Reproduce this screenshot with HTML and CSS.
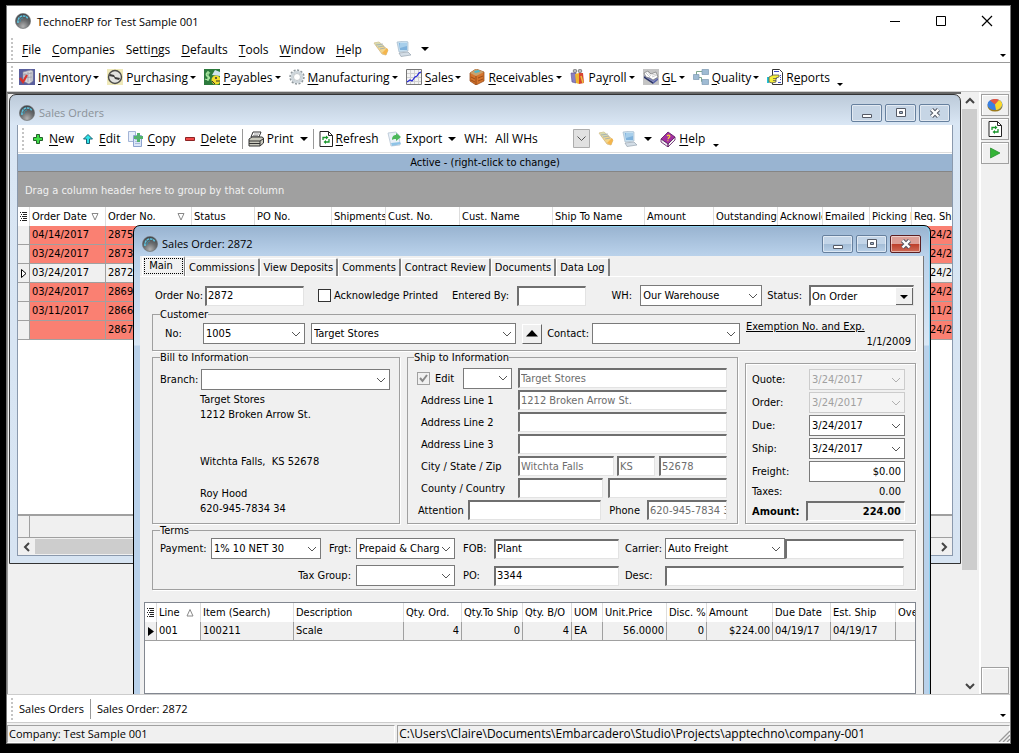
FILE: index.html
```html
<!DOCTYPE html>
<html lang="en">
<head>
    <meta charset="UTF-8">
    <meta name="viewport" content="width=device-width, initial-scale=1.0">
    <title>TechnoERP for Test Sample 001</title>
    <link rel="stylesheet" href="styles.css">
</head>
<body>
    <!-- Shared icons -->
    <svg class="defs" aria-hidden="true">
        <defs>
            <radialGradient id="ball" cx="0.5" cy="0.85" r="0.8">
                <stop offset="0" stop-color="#b0b0b0"/>
                <stop offset="0.5" stop-color="#6c6e70"/>
                <stop offset="1" stop-color="#42464a"/>
            </radialGradient>
        </defs>
        <symbol id="app" viewBox="0 0 16 16">
            <circle cx="8" cy="8" r="7.6" fill="url(#ball)" stroke="#6d7072" stroke-width="0.6"/>
            <path d="M3 10C2.500 5.500 5 3 8 3s4 1 5 3" fill="none" stroke="#5cc4e0" stroke-width="1.600" stroke-dasharray="2.500 0.700"/>
            <path d="M5 9c0-2 1-4 3-4" fill="none" stroke="#3d90aa" stroke-width="1"/>
        </symbol>
        <symbol id="note" viewBox="0 0 16 16">
            <path d="M1 2l5-1 9 8-2 5-4-1z" fill="#f3d58a" stroke="#cbb07a" stroke-width="0.7"/>
            <path d="M1 2l5-1 4 4-4 2z" fill="#d8d9ae"/>
            <path d="M3 4l7-1M5 6l6-1M7 8l5-1" stroke="#9aa9b5" stroke-width="0.8"/>
            <path d="M9 12l5-5 1 2-2 5z" fill="#f5b54c"/>
        </symbol>
        <symbol id="pc" viewBox="0 0 16 16">
            <path d="M1 1l9-1 2 1v9l-9 1z" fill="#c6dff0" stroke="#a9bccb" stroke-width="0.7"/>
            <path d="M3 2h8v7H4z" fill="#7fb2dc"/>
            <path d="M4 2h7v3L4 7z" fill="#a8cfeb"/>
            <path d="M3 12l9-1 3 3-10 1.500z" fill="#d3dde6" stroke="#98a5b0" stroke-width="0.7"/>
        </symbol>
        <symbol id="recycle" viewBox="0 0 14 16">
            <path d="M1 .5h8.500l4 4v11H1z" fill="#fff" stroke="#222"/>
            <path d="M9.500.5v4h4" fill="none" stroke="#222"/>
            <path d="M4 9V6.500h4M10 8v3H6" fill="none" stroke="#19962c" stroke-width="1.300"/>
            <path d="M7 4.500l2.500 2L7 8.500zM7 9L4.500 11 7 13z" fill="#19962c"/>
        </symbol>
        <symbol id="min" viewBox="0 0 12 12"><path d="M1.500 7.500h9v3h-9z" fill="#fff" stroke="#555a66"/></symbol>
        <symbol id="max" viewBox="0 0 12 12"><path d="M1.500 1.500h9v8h-9z" fill="#fff" stroke="#555a66"/><path d="M4.500 4.500h3v2h-3z" fill="#9fb4cc" stroke="#555a66"/></symbol>
        <symbol id="close" viewBox="0 0 12 12"><path d="M2.500 2.500l7 7M9.500 2.500l-7 7" stroke="#555a66" stroke-width="4.400"/><path d="M2.500 2.500l7 7M9.500 2.500l-7 7" stroke="#fff" stroke-width="2.400"/></symbol>
        <symbol id="list" viewBox="0 0 7 9"><path d="M0 .5h1M2 .5h5M1 2.500h1M3 2.500h4M0 4.500h1M2 4.500h5M1 6.500h1M3 6.500h4M0 8.500h1M2 8.500h5" stroke="#222"/></symbol>
    </svg>

    <div class="app">
        <header class="titlebar">
            <svg class="icon"><use href="#app"/></svg>
            <h1>TechnoERP for Test Sample 001</h1>
            <div class="winbuttons">
                <button type="button" aria-label="Minimize"><svg width="12" height="12"><path d="M1 6.500h10" stroke="#000"/></svg></button>
                <button type="button" aria-label="Maximize"><svg width="12" height="12"><path d="M1.500 1.500h9v9h-9z" fill="none" stroke="#000"/></svg></button>
                <button type="button" aria-label="Close"><svg width="12" height="12"><path d="M1 1l10 10M11 1L1 11" stroke="#000" stroke-width="1.200"/></svg></button>
            </div>
        </header>

        <nav class="bar menubar">
            <span class="grip"></span>
            <button type="button"><span><u>F</u>ile</span></button>
            <button type="button"><span><u>C</u>ompanies</span></button>
            <button type="button"><span>Setti<u>n</u>gs</span></button>
            <button type="button"><span><u>D</u>efaults</span></button>
            <button type="button"><span><u>T</u>ools</span></button>
            <button type="button"><span><u>W</u>indow</span></button>
            <button type="button"><span><u>H</u>elp</span></button>
            <button type="button" aria-label="Notes"><svg class="icon"><use href="#note"/></svg></button>
            <button type="button" class="split" aria-label="Computer"><svg class="icon"><use href="#pc"/></svg><i class="arrow wide"></i></button>
            <i class="arrow more"></i>
        </nav>

        <nav class="bar modules">
            <span class="grip"></span>
            <button type="button">
                <svg class="icon" viewBox="0 0 16 16"><path d="M0 0h16v16H0z" fill="#5a5f9e"/><path d="M4 3l8-2 2 1v10l-4 3-6-3z" fill="#d5d5da" stroke="#8a8a99" stroke-width="0.6"/><path d="M6 4v8M9 3v10M12 3v9M4 6l9-2M4 9l9-1" stroke="#9b9ba8" stroke-width="0.7"/><path d="M1 9l3 4 4-7" fill="none" stroke="#d8342c" stroke-width="2.200"/></svg>
                <span><u>I</u>nventory</span><i class="arrow"></i>
            </button>
            <button type="button">
                <svg class="icon" viewBox="0 0 16 16"><path d="M0 0h16v16H0z" fill="#efe9b9"/><circle cx="8" cy="8" r="6.500" fill="#e2e2de" stroke="#4c4c48" stroke-width="1.400"/><path d="M3 5l4 1 1 2 5 1-1 2-4-1-1-2-5-1z" fill="#3a3a38"/></svg>
                <span>P<u>u</u>rchasing</span><i class="arrow"></i>
            </button>
            <button type="button">
                <svg class="icon" viewBox="0 0 16 16"><path d="M0 0h16v16H0z" fill="#2c7a3c"/><path d="M6 4c-4-2-5 3-2 3.500S5 12 1 10M4 2v10" fill="none" stroke="#a9e6a0" stroke-width="1.300"/><path d="M8 6l3-5 5 2v4z" fill="#cfe4ee"/><circle cx="12" cy="11" r="4.500" fill="#f2dc2c"/><circle cx="12" cy="9" r="1" fill="#333"/><path d="M16 12h-4M8 12l3 3" stroke="#333"/></svg>
                <span><u>P</u>ayables</span><i class="arrow"></i>
            </button>
            <button type="button">
                <svg class="icon" viewBox="0 0 16 16"><circle cx="8" cy="8" r="6.700" fill="none" stroke="#8f979c" stroke-width="2" stroke-dasharray="2 1.500"/><circle cx="8" cy="8" r="5" fill="none" stroke="#ced6db" stroke-width="2.600"/><circle cx="8" cy="8" r="3.500" fill="#fff" stroke="#9aa2a7" stroke-width="0.6"/></svg>
                <span><u>M</u>anufacturing</span><i class="arrow"></i>
            </button>
            <button type="button">
                <svg class="icon" viewBox="0 0 16 16"><path d="M.5.5h15v15H.5z" fill="#f4f4f4" stroke="#777"/><path d="M4.500 1v14M8.500 1v14M12.500 1v14M1 4.500h14M1 8.500h14M1 12.500h14" stroke="#d0d0d0"/><path d="M1 13l3-2 2 1 3-4 2-1 2-3 2-1" fill="none" stroke="#2323d8" stroke-width="1.200"/></svg>
                <span><u>S</u>ales</span><i class="arrow"></i>
            </button>
            <button type="button">
                <svg class="icon" viewBox="0 0 16 16"><path d="M1 4l6-4 8 3v9l-8 4-6-4z" fill="#d5742c" stroke="#8c4314" stroke-width="0.7"/><path d="M1 4l6-4 8 3-8 4z" fill="#c9a26e"/><path d="M5 2l5-1 1 2-5 1z" fill="#4db8cc"/><path d="M7 7v9M2 8l4 2M9 9l5-2M9 12l5-2M2 11l4 2" stroke="#8c4314" stroke-width="0.8"/></svg>
                <span><u>R</u>eceivables</span><i class="arrow"></i>
            </button>
            <button type="button">
                <svg class="icon" viewBox="0 0 16 16"><circle cx="5" cy="2" r="1.800" fill="#bbb" stroke="#666" stroke-width="0.7"/><circle cx="10" cy="2" r="1.800" fill="#bbb" stroke="#666" stroke-width="0.7"/><path d="M1 4h5v10l-4-1z" fill="#8a7fc0" stroke="#5b5390" stroke-width="0.6"/><path d="M5 5l4-1v11l-3-1z" fill="#f0b52e"/><path d="M9 4h4l1 10-5 1z" fill="#d8442f"/><path d="M11 7l2 7" stroke="#e9c23c" stroke-width="1.500"/></svg>
                <span>Pa<u>y</u>roll</span><i class="arrow"></i>
            </button>
            <button type="button">
                <svg class="icon" viewBox="0 0 16 16"><path d="M0 0h16v16H0z" fill="#c4c4c4"/><path d="M1 7l9 6v2L1 9z" fill="#2c3566"/><path d="M10 13l5-4v2l-5 4z" fill="#5560a8"/><path d="M1 7l5-3 9 5-5 4z" fill="#7a82bb"/><path d="M1 4l4-2 3 3 5-2 2 5-5 3-3-2-4-1z" fill="#fff" stroke="#666" stroke-width="0.6"/><path d="M3 4l4 4M5 3l3 4M9 6l4-1M9 8l5-2" stroke="#aaa" stroke-width="0.6"/></svg>
                <span><u>G</u>L</span><i class="arrow"></i>
            </button>
            <button type="button">
                <svg class="icon" viewBox="0 0 16 16"><path d="M9 2.500H3.500V6M6 8.500h2.500v4H10" fill="none" stroke="#7fa78a"/><path d="M9 .5h6.500v5H9zM.5 5.500H6v5H.5zM9 10.500h6.500v5H9z" fill="#9fbbd3" stroke="#7d9ab3" stroke-width="0.7"/></svg>
                <span><u>Q</u>uality</span><i class="arrow"></i>
            </button>
            <button type="button">
                <svg class="icon" viewBox="0 0 16 16"><path d="M5.500.5h7l3 3v12h-10z" fill="#fff" stroke="#333"/><path d="M7 2.500h5M13 6.500h1M13 8.500h1M13 10.500h1M11 13.500h3" stroke="#3a49c8"/><path d="M0 8h2v6H0z" fill="#21c3d6"/><path d="M2 8l4-2h6v2l-3 1v4l-4 1-3-1z" fill="#f4ee3a" stroke="#555" stroke-width="0.8"/><path d="M6 9.500h4M6 11.500h3" stroke="#555" stroke-width="0.7"/></svg>
                <span>R<u>e</u>ports</span>
            </button>
            <i class="arrow low"></i>
        </nav>

        <main class="workspace">
            <div class="desktop">
                <!-- Order list -->
                <section class="window list-window">
                    <header class="caption">
                        <svg class="icon"><use href="#app"/></svg>
                        <h2>Sales Orders</h2>
                        <div class="capbuttons">
                            <button type="button" aria-label="Minimize"><svg><use href="#min"/></svg></button>
                            <button type="button" aria-label="Restore"><svg><use href="#max"/></svg></button>
                            <button type="button" aria-label="Close"><svg><use href="#close"/></svg></button>
                        </div>
                    </header>
                    <div class="client">
                        <div class="bar tools">
                            <span class="grip"></span>
                            <button type="button"><svg class="small" viewBox="0 0 10 10"><path d="M3.500.5h3v3h3v3h-3v3h-3v-3h-3v-3h3z" fill="#3fdc46" stroke="#23602a"/></svg><span><u>N</u>ew</span></button>
                            <button type="button"><svg class="small" viewBox="0 0 10 10"><path d="M5 .5L9.500 5h-3v4.500h-3V5h-3z" fill="#2fe3e8" stroke="#1c6477"/></svg><span><u>E</u>dit</span></button>
                            <button type="button"><svg class="icon" viewBox="0 0 16 16"><path d="M.5.5h7v10h-7z" fill="#e6eefb" stroke="#a3b4d6"/><path d="M5.500 4.500h8v11h-8z" fill="#dbe6f8" stroke="#8da3cf"/><path d="M7 8.500h5M7 10.500h5M7 12.500h5" stroke="#a9bbdf"/><path d="M9 2h3v3h3v3h-3v3H9V8H6V5h3z" fill="#52b26c"/></svg><span><u>C</u>opy</span></button>
                            <button type="button"><svg class="small" viewBox="0 0 10 10"><path d="M.5 3.500h9v3h-9z" fill="#f04747" stroke="#8c2323"/></svg><span><u>D</u>elete</span></button>
                            <span class="sep"></span>
                            <button type="button"><svg class="icon" viewBox="0 0 16 16"><path d="M5 1h8l-2 5H3z" fill="#fff" stroke="#333"/><path d="M6 3h5M5 4.500h5" stroke="#777" stroke-width="0.7"/><path d="M1 8l3-2h10l1.500 1v5L12 15H1z" fill="#c9c9bd" stroke="#333"/><path d="M1 10h11l3-2M1 12.500h11M12 10v5" fill="none" stroke="#333"/></svg><span>Print</span><i class="arrow wide"></i></button>
                            <span class="sep"></span>
                            <button type="button"><svg class="page-icon"><use href="#recycle"/></svg><span><u>R</u>efresh</span></button>
                            <button type="button"><svg class="icon" viewBox="0 0 16 16"><path d="M1 2l8-1 3 3 1 10-9 1z" fill="#e9f0f7" stroke="#b5c4d3" stroke-width="0.8"/><path d="M4 12l9-1 1 2-9 2z" fill="#8fc3e6"/><path d="M5 9c0-4 2-5 4-5V2l5 4-5 4V8c-2 0-3 0-4 1z" fill="#4bb85a"/></svg><span>Export</span><i class="arrow wide"></i></button>
                            <label for="wh-filter">WH:</label>
                            <select id="wh-filter" class="flat"><option>All WHs</option></select>
                            <button type="button" aria-label="Notes"><svg class="icon"><use href="#note"/></svg></button>
                            <button type="button" aria-label="Computer"><svg class="icon"><use href="#pc"/></svg><i class="arrow wide"></i></button>
                            <button type="button"><svg class="icon" viewBox="0 0 16 16"><path d="M1 8l7-7 7 5-7 7z" fill="#a22fa0" stroke="#5b1560" stroke-width="0.8"/><path d="M1 8v3l7 5v-3zM8 13l7-7v3l-7 7z" fill="#f2f2f2" stroke="#5b1560" stroke-width="0.8"/><path d="M7 5c2-2 4 0 2 1.500L8 8M7.500 9.500h.8" fill="none" stroke="#f7d23c" stroke-width="1.300"/></svg><span><u>H</u>elp</span></button>
                            <i class="arrow low"></i>
                        </div>
                        <div class="filter">Active - (right-click to change)</div>
                        <div class="groupby">Drag a column header here to group by that column</div>
                        <div class="grid-area">
                            <table class="grid orders">
                                <colgroup>
                                    <col style="width:12px"><col style="width:76px"><col style="width:86px"><col style="width:63px"><col style="width:77px"><col style="width:54px"><col style="width:74px"><col style="width:93px"><col style="width:92px"><col style="width:69px"><col style="width:64px"><col style="width:45px"><col style="width:47px"><col style="width:42px"><col style="width:76px">
                                </colgroup>
                                <thead>
                                    <tr>
                                        <th class="ind"><svg class="list-icon"><use href="#list"/></svg></th>
                                        <th>Order Date<svg class="sort" viewBox="0 0 8 8"><path d="M1 .5h6L4 7z" fill="none" stroke="#888"/></svg></th>
                                        <th>Order No.<svg class="sort" viewBox="0 0 8 8"><path d="M1 .5h6L4 7z" fill="none" stroke="#888"/></svg></th>
                                        <th>Status</th><th>PO No.</th><th>Shipments</th><th>Cust. No.</th><th>Cust. Name</th><th>Ship To Name</th><th>Amount</th><th>Outstanding</th><th>Acknowledged</th><th>Emailed</th><th>Picking List</th><th>Req. Ship</th>
                                    </tr>
                                </thead>
                                <tbody>
                                    <tr><td class="ind"></td><td>04/14/2017</td><td>2875</td><td colspan="11"></td><td>03/24/2017</td></tr>
                                    <tr><td class="ind"></td><td>03/24/2017</td><td>2873</td><td colspan="11"></td><td>03/24/2017</td></tr>
                                    <tr class="current"><td class="ind"><svg class="pointer" viewBox="0 0 6 9"><path d="M.5.500v8L5 4.500z" fill="#fff" stroke="#000"/></svg></td><td>03/24/2017</td><td>2872</td><td colspan="11"></td><td>03/24/2017</td></tr>
                                    <tr><td class="ind"></td><td>03/24/2017</td><td>2869</td><td colspan="11"></td><td>03/24/2017</td></tr>
                                    <tr><td class="ind"></td><td>03/11/2017</td><td>2866</td><td colspan="11"></td><td>03/11/2017</td></tr>
                                    <tr><td class="ind"></td><td></td><td>2867</td><td colspan="11"></td><td>03/24/2017</td></tr>
                                </tbody>
                            </table>
                        </div>
                        <div class="grid-footer"></div>
                        <div class="hscroll">
                            <button type="button" aria-label="Scroll left"><svg width="8" height="10"><path d="M6 1L2 5l4 4" fill="none" stroke="#444" stroke-width="2"/></svg></button>
                            <span class="thumb"></span>
                            <button type="button" aria-label="Scroll right"><svg width="8" height="10"><path d="M2 1l4 4-4 4" fill="none" stroke="#444" stroke-width="2"/></svg></button>
                        </div>
                    </div>
                </section>

                <!-- Order form -->
                <section class="window order-window">
                    <header class="caption">
                        <svg class="icon"><use href="#app"/></svg>
                        <h2>Sales Order: 2872</h2>
                        <div class="capbuttons">
                            <button type="button" aria-label="Minimize"><svg><use href="#min"/></svg></button>
                            <button type="button" aria-label="Restore"><svg><use href="#max"/></svg></button>
                            <button type="button" class="red" aria-label="Close"><svg><use href="#close"/></svg></button>
                        </div>
                    </header>
                    <div class="client">
                        <div class="tabs">
                            <button type="button" class="active">Main</button>
                            <button type="button">Commissions</button>
                            <button type="button">View Deposits</button>
                            <button type="button">Comments</button>
                            <button type="button">Contract Review</button>
                            <button type="button">Documents</button>
                            <button type="button">Data Log</button>
                        </div>
                        <form class="page">
                            <div class="row top">
                                <label for="order-no">Order No:</label>
                                <input type="text" id="order-no" value="2872">
                                <label class="check"><input type="checkbox">Acknowledge Printed</label>
                                <label for="entered" class="l-entered">Entered By:</label>
                                <input type="text" id="entered">
                                <label for="wh" class="l-wh">WH:</label>
                                <select id="wh"><option>Our Warehouse</option></select>
                                <label for="status" class="l-status">Status:</label>
                                <select id="status" class="classic"><option>On Order</option></select>
                            </div>

                            <fieldset class="customer">
                                <legend>Customer</legend>
                                <div class="row">
                                    <label for="cust-no" class="l-no">No:</label>
                                    <select id="cust-no"><option>1005</option></select>
                                    <select id="cust-name" aria-label="Customer name"><option>Target Stores</option></select>
                                    <button type="button" class="up" aria-label="Details"><svg width="12" height="7"><path d="M6 0l6 6.500H0z" fill="#000"/></svg></button>
                                    <label for="contact">Contact:</label>
                                    <select id="contact"><option></option></select>
                                    <div class="exempt">
                                        <a href="#">Exemption No. and Exp.</a>
                                        <span>1/1/2009</span>
                                    </div>
                                </div>
                            </fieldset>

                            <div class="panels">
                                <fieldset class="bill">
                                    <legend>Bill to Information</legend>
                                    <div class="row">
                                        <label for="branch">Branch:</label>
                                        <select id="branch"><option></option></select>
                                    </div>
                                    <address>
                                        <p>Target Stores<br>1212 Broken Arrow St.</p>
                                        <p class="city">Witchta Falls, &nbsp;KS 52678</p>
                                        <p>Roy Hood<br>620-945-7834 34</p>
                                    </address>
                                </fieldset>

                                <fieldset class="ship">
                                    <legend>Ship to Information</legend>
                                    <div class="row">
                                        <span class="edit">
                                            <label><input type="checkbox" class="sunk" checked disabled>Edit</label>
                                            <select id="ship-no" aria-label="Ship to"><option></option></select>
                                        </span>
                                        <input type="text" aria-label="Ship to name" value="Target Stores" disabled>
                                    </div>
                                    <div class="row"><label for="addr1">Address Line 1</label><input type="text" id="addr1" value="1212 Broken Arrow St." disabled></div>
                                    <div class="row"><label for="addr2">Address Line 2</label><input type="text" id="addr2"></div>
                                    <div class="row"><label for="addr3">Address Line 3</label><input type="text" id="addr3"></div>
                                    <div class="row">
                                        <label for="city">City / State / Zip</label>
                                        <input type="text" id="city" value="Witchta Falls" disabled>
                                        <input type="text" id="state" aria-label="State" value="KS" disabled>
                                        <input type="text" id="zip" aria-label="Zip" value="52678" disabled>
                                    </div>
                                    <div class="row">
                                        <label for="county">County / Country</label>
                                        <input type="text" id="county">
                                        <input type="text" id="country" aria-label="Country">
                                    </div>
                                    <div class="row attention">
                                        <label for="attention">Attention</label>
                                        <input type="text" id="attention">
                                        <label for="phone" class="l-phone">Phone</label>
                                        <input type="text" id="phone" value="620-945-7834 34" disabled>
                                    </div>
                                </fieldset>

                                <div class="totals">
                                    <label for="quote">Quote:</label><select id="quote" disabled><option>3/24/2017</option></select>
                                    <label for="ordered">Order:</label><select id="ordered" disabled><option>3/24/2017</option></select>
                                    <label for="due">Due:</label><select id="due"><option>3/24/2017</option></select>
                                    <label for="shipped">Ship:</label><select id="shipped"><option>3/24/2017</option></select>
                                    <label for="freight">Freight:</label><input type="text" id="freight" class="plain" value="$0.00">
                                    <span>Taxes:</span><output class="taxes">0.00</output>
                                    <b>Amount:</b><output class="amount">224.00</output>
                                </div>
                            </div>

                            <fieldset class="terms">
                                <legend>Terms</legend>
                                <div class="terms-grid">
                                    <label for="payment">Payment:</label>
                                    <select id="payment"><option>1% 10 NET 30</option></select>
                                    <label for="frgt">Frgt:</label>
                                    <select id="frgt"><option>Prepaid &amp; Charg</option></select>
                                    <label for="fob">FOB:</label>
                                    <input type="text" id="fob" value="Plant">
                                    <label for="carrier">Carrier:</label>
                                    <select id="carrier"><option>Auto Freight</option></select>
                                    <input type="text" aria-label="Carrier note">
                                    <label for="tax" class="l-tax">Tax Group:</label>
                                    <select id="tax"><option></option></select>
                                    <label for="po">PO:</label>
                                    <input type="text" id="po" value="3344">
                                    <label for="desc">Desc:</label>
                                    <input type="text" id="desc">
                                </div>
                            </fieldset>

                            <div class="lines">
                                <table class="grid">
                                    <colgroup>
                                        <col style="width:12px"><col style="width:44px"><col style="width:93px"><col style="width:110px"><col style="width:58px"><col style="width:61px"><col style="width:49px"><col style="width:31px"><col style="width:64px"><col style="width:40px"><col style="width:66px"><col style="width:58px"><col style="width:65px"><col style="width:60px">
                                    </colgroup>
                                    <thead>
                                        <tr>
                                            <th class="ind"><svg class="list-icon"><use href="#list"/></svg></th>
                                            <th>Line<svg class="sort" viewBox="0 0 8 8"><path d="M1 7h6L4 .5z" fill="none" stroke="#888"/></svg></th>
                                            <th>Item (Search)</th><th>Description</th><th>Qty. Ord.</th><th>Qty.To Ship</th><th>Qty. B/O</th><th>UOM</th><th>Unit.Price</th><th>Disc. %</th><th>Amount</th><th>Due Date</th><th>Est. Ship</th><th>Override</th>
                                        </tr>
                                    </thead>
                                    <tbody>
                                        <tr>
                                            <td class="ind"><svg class="pointer" viewBox="0 0 6 9"><path d="M0 0v9l6-4.500z" fill="#000"/></svg></td>
                                            <td class="focus">001</td><td>100211</td><td>Scale</td><td class="num">4</td><td class="num">0</td><td class="num">4</td><td>EA</td><td class="num">56.0000</td><td class="num">0</td><td class="num">$224.00</td><td>04/19/17</td><td>04/19/17</td><td></td>
                                        </tr>
                                    </tbody>
                                </table>
                            </div>
                        </form>
                    </div>
                </section>
            </div>

            <div class="vscroll">
                <button type="button" aria-label="Scroll up"><svg width="10" height="8"><path d="M1 6l4-4 4 4" fill="none" stroke="#444" stroke-width="2"/></svg></button>
                <span class="thumb"></span>
                <button type="button" aria-label="Scroll down"><svg width="10" height="8"><path d="M1 2l4 4 4-4" fill="none" stroke="#444" stroke-width="2"/></svg></button>
            </div>

            <aside class="rail">
                <button type="button" aria-label="Charts"><svg class="icon" viewBox="0 0 16 16"><ellipse cx="8" cy="9" rx="7.500" ry="5.500" fill="#9c7b1c"/><ellipse cx="8" cy="7.500" rx="7.500" ry="5.500" fill="#3a7fe0"/><path d="M8 7.500L3 3.500C6 1.500 10 1.500 12 3z" fill="#e8573f"/><path d="M8 7.500L12 3c5 2 4 9-3 10z" fill="#fbd72b"/></svg></button>
                <button type="button" aria-label="Refresh"><svg class="page-icon"><use href="#recycle"/></svg></button>
                <button type="button" aria-label="Run"><svg width="10" height="12"><path d="M.5 1v10L10 6z" fill="#35b437" stroke="#1f8a26" stroke-width="0.7"/></svg></button>
                <span class="corner"></span>
            </aside>
        </main>

        <nav class="bar taskbar">
            <span class="grip"></span>
            <button type="button">Sales Orders</button>
            <span class="sep"></span>
            <button type="button">Sales Order: 2872</button>
            <i class="arrow more"></i>
        </nav>

        <footer class="status">
            <span>Company: Test Sample 001</span>
            <span class="path">C:\Users\Claire\Documents\Embarcadero\Studio\Projects\apptechno\company-001</span>
            <svg class="resize" width="12" height="12"><path d="M12 1L1 12M12 5l-7 7M12 9l-3 3" stroke="#999" stroke-width="1.300"/></svg>
        </footer>
    </div>
</body>
</html>
```
FILE: styles.css
```css
* {
    box-sizing: border-box;
}
body {
    margin: 0;
    padding: 5px 8px 9px 6px;
    height: 100vh;
    background: #000;
    color: #000;
    font: 11px "DejaVu Sans Condensed", Tahoma, sans-serif;
    overflow: hidden;
}
button, input, select {
    font: inherit;
    color: inherit;
    margin: 0;
}
button {
    background: none;
    border: 0;
    padding: 0;
    white-space: nowrap;
}
svg {
    display: block;
    flex: none;
}
h1, h2 {
    margin: 0;
    font: 11px "Open Sans", "Segoe UI", sans-serif;
    white-space: nowrap;
}
u {
    text-underline-offset: 2px;
}
.defs {
    position: absolute;
    width: 0;
    height: 0;
}
.icon {
    width: 16px;
    height: 16px;
}
.page-icon {
    width: 14px;
    height: 16px;
}
.app {
    height: 100%;
    display: flex;
    flex-direction: column;
    background: #fff;
    border: 1px solid #777;
}

/* Title bar */
.titlebar {
    height: 30px;
    display: flex;
    align-items: center;
    gap: 6px;
    padding-left: 8px;
}
.winbuttons {
    display: flex;
    margin-left: auto;
}
.winbuttons button {
    width: 46px;
    display: flex;
    justify-content: center;
}

/* Tool bars */
.bar {
    display: flex;
    align-items: center;
    font: 12px "Open Sans", "Segoe UI", sans-serif;
    position: relative;
    flex: none;
}
.bar button {
    display: flex;
    align-items: center;
    gap: 3px;
}
.grip {
    width: 2px;
    height: 22px;
    margin-left: 4px;
    background: repeating-linear-gradient(#c4c4c4 0 2px, #fff 2px 4px);
}
.sep {
    width: 1px;
    height: 20px;
    background: #999;
}
.arrow {
    border: 3px solid transparent;
    border-top-color: #000;
    border-bottom: 0;
}
.arrow.wide {
    border-width: 4px 4px 0;
    margin-left: 3px;
}
.arrow.more {
    position: absolute;
    right: 4px;
    bottom: 5px;
}
.arrow.low {
    align-self: flex-end;
    margin-bottom: 5px;
}
.menubar {
    height: 27px;
    gap: 11px;
    border-bottom: 1px solid #999;
}
.menubar .grip {
    margin-right: -2px;
}
.menubar .icon {
    margin-right: -4px;
}
.menubar .split {
    gap: 10px;
}
.modules {
    height: 28px;
    gap: 8px;
}
.modules .grip {
    margin-right: -2px;
}
.modules .arrow {
    margin-left: -1px;
}

/* Workspace */
.workspace {
    flex: 1;
    min-height: 0;
    display: flex;
    background: #f0f0f0;
    border-top: 1px solid #ccc;
}
.desktop {
    flex: 1;
    position: relative;
    overflow: hidden;
    border: 1px solid #666;
    border-width: 2px 0 0 1px;
    border-left-color: #999;
}
.window {
    position: absolute;
    display: flex;
    flex-direction: column;
    border: 1px solid #333;
    border-radius: 7px 7px 0 0;
    padding: 0 6px 7px;
}
.list-window {
    top: 0;
    right: 0;
    bottom: 130px;
    left: 1px;
    background: linear-gradient(#bccad9, #d9e6f4 29px, #d7e4f2);
    padding: 0 7px 7px;
}
.order-window {
    top: 131px;
    right: 30px;
    bottom: -8px;
    left: 125px;
    border-color: #000;
    background: linear-gradient(#98b3d0, #b9d1ea 29px, #d9e7f5 119px, #b9d1ea 120px);
    box-shadow: inset -1px 1px #8fd0ee;
}
.caption {
    height: 30px;
    flex: none;
    display: flex;
    align-items: center;
    gap: 4px;
    padding: 5px 3px 0 2px;
}
.list-window .caption {
    color: #8b9299;
}
.capbuttons {
    display: flex;
    gap: 3px;
    margin-left: auto;
}
.capbuttons button {
    width: 31px;
    height: 18px;
    display: flex;
    justify-content: center;
    align-items: center;
    border: 1px solid #66809e;
    border-radius: 2px;
    box-shadow: inset 0 0 0 1px rgba(255, 255, 255, 0.5);
    background: linear-gradient(#c3d5e8 50%, #a3bcd6 50%, #b9d0e8);
}
.list-window .capbuttons button {
    background: #c6d5e5;
}
.capbuttons button.red {
    border-color: #5c1f22;
    background: linear-gradient(#dc9f97 50%, #bc3d29 50%, #cf6c58);
}
.capbuttons svg {
    width: 12px;
    height: 12px;
}
.client {
    flex: 1;
    min-height: 0;
    display: flex;
    flex-direction: column;
    background: #f0f0f0;
}
.list-window .client {
    background: #fff;
    border: solid #8a99ad;
    border-width: 0 1px 1px;
}

/* Order list */
.tools {
    height: 28px;
    gap: 8px;
    border-bottom: 1px solid #ddd;
}
.tools .small {
    width: 10px;
    height: 10px;
    margin: 0 3px 0 1px;
}
.tools .sep {
    margin: 0 -3px;
}
.filter {
    height: 17px;
    margin-top: 1px;
    line-height: 17px;
    text-align: center;
    background: #99b4d1;
}
.groupby {
    height: 36px;
    padding: 2px 7px 0;
    line-height: 34px;
    background: #a0a0a0;
    border-top: 1px solid #858585;
    color: #f0f0f0;
}
.grid-area {
    flex: 1;
    overflow: hidden;
}
.grid {
    table-layout: fixed;
    width: 1px;
    border-collapse: separate;
    border-spacing: 0;
}
.grid th, .grid td {
    height: 19px;
    padding: 0 0 0 2px;
    border: solid #a0a0a0;
    border-width: 0 1px 1px 0;
    font-weight: normal;
    text-align: left;
    line-height: 16px;
    white-space: nowrap;
    overflow: hidden;
}
.grid th {
    background: #fff;
    border-color: #ddd;
    border-bottom: 0;
}
.grid .ind {
    padding: 0;
    background: #f0f0f0;
}
.grid th.ind {
    background: #fff;
}
.orders td {
    background: #fa8072;
}
.orders .current td {
    background: #f0f0f0;
}
.list-icon {
    width: 7px;
    height: 9px;
    margin: 0 auto;
}
.pointer {
    width: 6px;
    height: 9px;
    margin: 0 auto;
}
.sort {
    width: 8px;
    height: 8px;
    float: right;
    margin: 4px 6px 0 0;
}
.grid-footer {
    height: 23px;
    border-top: 2px solid #a0a0a0;
    background: linear-gradient(90deg, #f0f0f0 11px, #a0a0a0 11px 12px, #f0f0f0 12px);
}
.hscroll {
    height: 18px;
    display: flex;
    border-top: 1px solid #a0a0a0;
    background: #f0f0f0;
}
.hscroll button {
    width: 17px;
    display: flex;
    justify-content: center;
    align-items: center;
}
.thumb {
    background: #cdcdcd;
}
.hscroll .thumb {
    flex: 1;
    margin: 1px 180px 1px 0;
}

/* Order form */
.order-window .client {
    border-right: 1px solid #777;
}
.tabs {
    display: flex;
    align-items: flex-end;
    height: 21px;
    padding-left: 2px;
    border-bottom: 1px solid #fff;
    flex: none;
}
.tabs button {
    height: 18px;
    padding: 0 3px;
    border: solid #fff;
    border-width: 1px 2px 0 1px;
    border-right-color: #808080;
    border-radius: 2px 2px 0 0;
}
.tabs .active {
    align-self: flex-start;
    height: 20px;
    width: 43px;
    padding: 0 8px 3px 3px;
    outline: 1px dotted #000;
    outline-offset: -3px;
    border-width: 1px 1px 0;
    border-right-color: #808080;
}
.page {
    flex: 1;
    min-height: 0;
    display: flex;
    flex-direction: column;
    padding: 8px 7px 0 4px;
}
.row {
    display: flex;
    align-items: center;
}
label, output, .totals span {
    white-space: nowrap;
}
input[type="text"] {
    height: 20px;
    min-width: 0;
    padding: 0 1px 1px;
    background: #fff;
    border: 1px solid #e3e3e3;
    border-top: 2px solid #6f6f6f;
    border-left: 2px solid #6f6f6f;
}
input[type="text"]:disabled {
    color: #6d6d6d;
}
input.plain[type="text"] {
    border: 1px solid #7a7a7a;
    height: 21px;
    padding-right: 3px;
    text-align: right;
}
select {
    height: 21px;
    min-width: 0;
    appearance: none;
    border: 1px solid #7a7a7a;
    border-radius: 0;
    padding: 0 14px 0 2px;
    background: #fff url("data:image/svg+xml,%3Csvg xmlns='http://www.w3.org/2000/svg' width='10' height='6'%3E%3Cpath d='M1 1l4 4 4-4' fill='none' stroke='%23555'/%3E%3C/svg%3E") no-repeat right 3px center;
}
select:disabled {
    opacity: 1;
    color: #a0a0a0;
    border-color: #ccc;
    background: #f4f4f4 url("data:image/svg+xml,%3Csvg xmlns='http://www.w3.org/2000/svg' width='10' height='6'%3E%3Cpath d='M1 1l4 4 4-4' fill='none' stroke='%23b0b0b0'/%3E%3C/svg%3E") no-repeat right 3px center;
}
select.flat {
    width: 95px;
    height: 19px;
    border: 0;
    padding: 0;
    background: url("data:image/svg+xml,%3Csvg xmlns='http://www.w3.org/2000/svg' width='17' height='19'%3E%3Cpath d='M.5.5h16v18H.5z' fill='%23e1e1e1' stroke='%23adadad'/%3E%3Cpath d='M4.500 7.500l4 4 4-4' fill='none' stroke='%23555'/%3E%3C/svg%3E") no-repeat right center;
}
select.classic {
    border: 1px solid #e3e3e3;
    border-top: 2px solid #6f6f6f;
    border-left: 2px solid #6f6f6f;
    padding-left: 1px;
    background: #fff url("data:image/svg+xml,%3Csvg xmlns='http://www.w3.org/2000/svg' width='17' height='17'%3E%3Cpath d='M0 0h17v17H0z' fill='%23666'/%3E%3Cpath d='M0 0h16v16H0z' fill='%23f0f0f0'/%3E%3Cpath d='M4 7h8l-4 4z'/%3E%3C/svg%3E") no-repeat right center;
}
input[type="checkbox"] {
    appearance: none;
    width: 13px;
    height: 13px;
    border: 1px solid #333;
    background: #fff;
}
input.sunk[type="checkbox"] {
    border: 1px solid #a0a0a0;
    background: #f0f0f0 url("data:image/svg+xml,%3Csvg xmlns='http://www.w3.org/2000/svg' width='11' height='11'%3E%3Cpath d='M2 5l2.500 3L9 2' fill='none' stroke='%23888' stroke-width='2'/%3E%3C/svg%3E") center;
}
fieldset {
    margin: 0;
    min-width: 0;
    padding: 2px 7px 6px;
    border: 1px solid #a0a0a0;
    box-shadow: 1px 1px #fff;
}
legend {
    padding: 2px 0 0;
    line-height: 12px;
}
.top {
    height: 21px;
    margin: 0 2px 1px 11px;
}
#order-no {
    width: 99px;
    margin-left: 2px;
}
.check {
    display: flex;
    align-items: center;
    gap: 3px;
    margin-left: 14px;
}
.l-entered {
    margin-left: 14px;
}
#entered {
    width: 69px;
    margin-left: 8px;
}
.l-wh {
    margin-left: auto;
}
#wh {
    width: 122px;
    margin-left: 8px;
}
.l-status {
    margin-left: 5px;
}
#status {
    width: 105px;
    margin-left: 7px;
}
.customer, .panels, .terms {
    margin-left: 8px;
}
.l-no {
    width: 38px;
    margin-left: 5px;
}
#cust-no {
    width: 102px;
}
#cust-name {
    flex: 1;
    margin-left: 6px;
}
.up {
    width: 20px;
    height: 20px;
    margin: 0 5px 0 6px;
    display: flex;
    justify-content: center;
    align-items: center;
    border: 1px solid #fff;
    border-right-color: #666;
    border-bottom-color: #666;
}
#contact {
    width: 148px;
    margin-left: 3px;
}
.exempt {
    width: 165px;
    height: 21px;
    margin-left: 6px;
    margin-right: -3px;
    display: flex;
    flex-direction: column;
    justify-content: center;
    line-height: 15px;
}
.exempt a {
    color: inherit;
}
.exempt span {
    text-align: right;
}
.panels {
    display: grid;
    grid-template-columns: 248fr 331fr 171fr;
    gap: 7px;
    margin-top: -1px;
}
.panels fieldset {
    height: 174px;
}
.bill {
    padding: 5px 9px 0 7px;
}
#branch {
    flex: 1;
    margin-left: 3px;
}
address {
    margin: 2px 0 0 40px;
    font-style: normal;
    line-height: 15px;
}
address p {
    margin: 0;
}
address .city {
    margin: 32px 0 17px;
}
.ship {
    padding: 3px 10px 0 13px;
}
.ship legend {
    margin-left: -7px;
}
.ship .row {
    height: 22px;
}
.ship .row > label:first-child, .edit {
    width: 97px;
    flex: none;
}
.ship .row > input {
    flex: 1;
}
.edit, .edit label {
    display: flex;
    align-items: center;
}
.edit label {
    margin-left: -4px;
    gap: 5px;
}
.edit select {
    width: 49px;
    margin: 0 6px 0 auto;
}
.ship .row > #state {
    flex: 0 0 38px;
    margin: 0 4px 0 3px;
}
.ship .row > #zip {
    flex: 0 0 68px;
}
.ship .row > #country {
    flex: 0 0 119px;
    margin-left: 5px;
}
.ship .attention > label:first-child {
    width: 50px;
    margin-left: -3px;
}
.l-phone {
    margin: 0 7px 0 8px;
}
.ship .row > #phone {
    flex: 0 0 80px;
    padding-right: 0;
}
.totals {
    display: grid;
    grid-template-columns: 1fr 96px;
    grid-template-rows: repeat(5, 23px) 16px 24px;
    align-items: center;
    align-content: start;
    margin-top: 13px;
    padding: 4px 10px 0 6px;
    border: 1px solid #a0a0a0;
    box-shadow: inset 1px 1px #fff, 1px 1px #fff;
}
.taxes {
    text-align: right;
    padding-right: 4px;
}
.amount {
    height: 20px;
    margin-left: -3px;
    padding-right: 3px;
    line-height: 17px;
    text-align: right;
    font-weight: bold;
    border: 1px solid #fff;
    border-top: 2px solid #6f6f6f;
    border-left: 2px solid #6f6f6f;
}
.terms {
    margin-top: -1px;
    padding: 1px 11px 3px 7px;
}
.terms-grid {
    display: grid;
    grid-template-columns: 51px 110fr 35px 99fr 39px 125fr 46px 120fr 119fr;
    grid-auto-rows: 21px;
    row-gap: 6px;
    align-items: center;
}
.terms-grid label[for="frgt"], .terms-grid label[for="fob"], .terms-grid label[for="po"] {
    padding-left: 8px;
}
.terms-grid label[for="carrier"], .terms-grid label[for="desc"] {
    padding-left: 6px;
}
.terms-grid .l-tax {
    grid-column: 1 / 4;
    text-align: right;
    padding-right: 5px;
}
#desc {
    grid-column: span 2;
}
.lines {
    flex: 1;
    margin-top: 12px;
    background: #fff;
    border: 1px solid #828790;
    overflow: hidden;
}
.lines td {
    background: #f0f0f0;
}
.lines .focus {
    background: #fff;
}
.lines .num {
    text-align: right;
    padding-right: 2px;
}

/* Scroll bar and side rail */
.vscroll {
    width: 18px;
    display: flex;
    flex-direction: column;
    padding: 0 2px 0 1px;
    background: #f0f0f0;
}
.vscroll button {
    height: 17px;
    display: flex;
    justify-content: center;
    align-items: center;
}
.vscroll .thumb {
    flex: 1;
    margin-bottom: 107px;
}
.rail {
    width: 31px;
    display: flex;
    flex-direction: column;
    gap: 2px;
    padding: 2px 1px 0 0;
    border-left: 2px solid #fff;
}
.rail button, .corner {
    height: 22px;
    display: flex;
    justify-content: center;
    align-items: center;
    border: 1px solid #a0a0a0;
    box-shadow: inset 1px 1px #fff;
}
.corner {
    height: 27px;
    margin-top: auto;
}

/* Bottom bars */
.taskbar {
    height: 29px;
    gap: 6px;
    border-top: 1px solid #ccc;
    border-bottom: 1px solid #ccc;
    font: 11px "Open Sans", "Segoe UI", sans-serif;
}
.status {
    height: 20px;
    flex: none;
    display: grid;
    grid-template-columns: 389fr 614fr;
    gap: 2px;
    padding-top: 2px;
    background: #f0f0f0;
    position: relative;
    font: 11px/16px "Open Sans", "Segoe UI", sans-serif;
}
.status .path {
    font-size: 12px;
}
.status span {
    padding-left: 1px;
    border: 1px solid #a0a0a0;
    border-right-color: #fff;
    border-bottom-color: #fff;
    white-space: nowrap;
    overflow: hidden;
}
.resize {
    position: absolute;
    right: 0;
    bottom: 1px;
}
```
